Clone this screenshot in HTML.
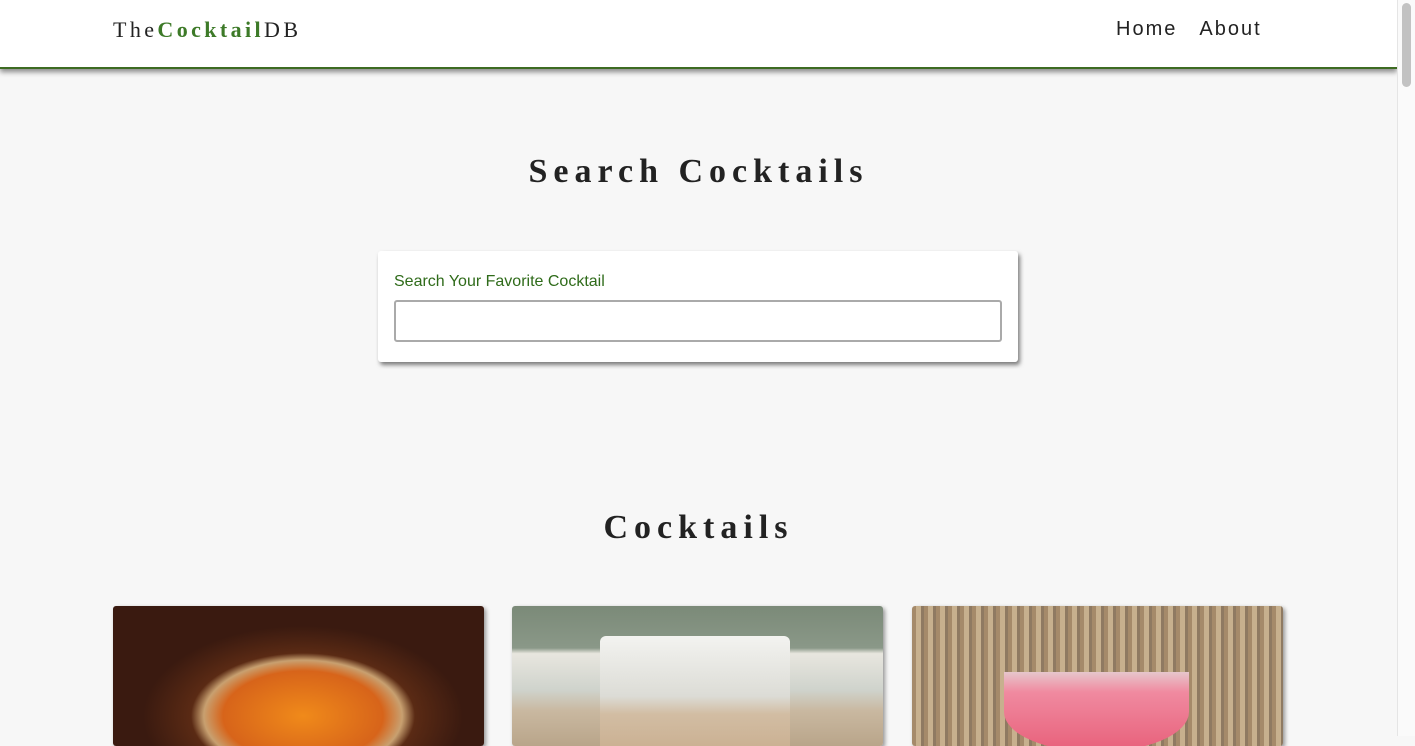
<!DOCTYPE html>
<html><head><style>
body{margin:0;width:1415px;height:736px;overflow:hidden;background:#f7f7f7;font-family:"Liberation Sans",sans-serif;position:relative}
.nav{position:absolute;left:0;top:0;width:1397px;height:67px;background:#fff;border-bottom:2px solid #3d6b22;box-shadow:0 3px 5px rgba(0,0,0,.45)}
.logo{position:absolute;left:113px;top:17px;font-family:"Liberation Serif",serif;font-size:22px;letter-spacing:3.4px;color:#222}
.logo b{color:#3d7a28}
.links{position:absolute;left:1116px;top:18px;font-size:20px;letter-spacing:2px;color:#222}
.links span{margin-right:22px}
h1{position:absolute;margin:0;width:1397px;text-align:center;font-family:"Liberation Serif",serif;font-weight:bold;font-size:34px;letter-spacing:6px;color:#222}
.box{position:absolute;left:378px;top:251px;width:640px;height:111px;background:#fff;border-radius:3px;box-shadow:2px 3px 4px rgba(0,0,0,.5)}
.box label{position:absolute;left:16px;top:22px;font-size:16px;color:#2f6b1a}
.box .in{position:absolute;left:16px;top:49px;width:604px;height:38px;border:2px solid #aaa;border-radius:3px}
.card{position:absolute;top:606px;width:371px;height:140px;border-radius:3px;box-shadow:2px 2px 4px rgba(0,0,0,.4);overflow:hidden}
.sb{position:absolute;left:1397px;top:0;width:18px;height:736px;background:#fafafa;border-left:1px solid #e5e5e5}
.sb div{position:absolute;left:4px;top:3px;width:9px;height:84px;background:#c2c2c2;border-radius:5px}
</style></head><body>
<div class="nav"><div class="logo">The<b>Cocktail</b>DB</div><div class="links"><span>Home</span>About</div></div>
<h1 style="top:153px">Search Cocktails</h1>
<div class="box"><label>Search Your Favorite Cocktail</label><div class="in"></div></div>
<h1 style="top:509px">Cocktails</h1>
<div class="card" style="left:113px;background:radial-gradient(ellipse 160px 90px at 190px 110px,#f08a1a,#d7641a 50%,#c8a070 62%,#5a2a14 70%,#3a1a10)"></div>
<div class="card" style="left:512px;background:linear-gradient(#7b8a78,#8a9888 30%,#e8e6df 34%,#cfd3cc 60%,#c9b8a0 75%,#b9a58a)"><div style="position:absolute;left:88px;top:30px;width:190px;height:120px;background:linear-gradient(#f3f3f0,#dcdcd6 50%,#d2bda3 65%,#c9ae8f);border-radius:6px"></div></div>
<div class="card" style="left:912px;background:repeating-linear-gradient(90deg,#a58a6a 0 4px,#c7b08e 4px 9px,#8f7a62 9px 12px)"><div style="position:absolute;left:92px;top:66px;width:185px;height:80px;background:linear-gradient(#e6c6cc,#f08aa0 25%,#e8607a);border-radius:0 0 50% 50%"></div></div>
<div class="sb"><div></div></div>
</body></html>
